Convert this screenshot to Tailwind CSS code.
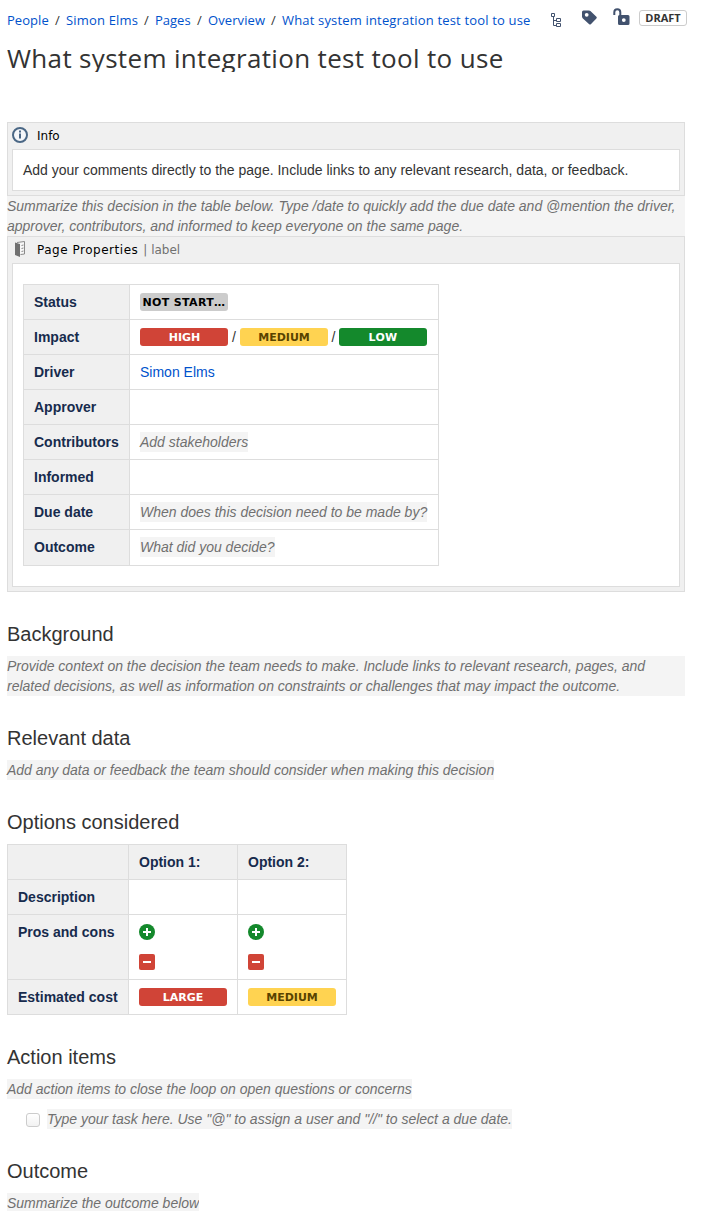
<!DOCTYPE html>
<html lang="en">
<head>
<meta charset="utf-8">
<title>What system integration test tool to use</title>
<script src="https://cdn.jsdelivr.net/npm/@tailwindcss/browser@4"></script>
</head>
<body class="h-[1221px] w-[707px] overflow-hidden bg-white pl-[7px] font-['Liberation_Sans',Arial,sans-serif] text-[14px] leading-5 text-[#333]">
<header class="h-[122px] whitespace-nowrap font-['Open_Sans','Noto_Sans',sans-serif]">
  <div class="flex h-10 items-start">
    <nav class="mt-[10px] flex w-[543px] text-[13px] text-[#0052cc]">
      <a class="w-[48px] tracking-[0.05px]">People</a><span class="w-[11px] text-[#333]">/</span>
      <a class="w-[78px] tracking-[0.17px]">Simon Elms</a><span class="w-[11px] text-[#333]">/</span>
      <a class="w-[42px]">Pages</a><span class="w-[11px] text-[#333]">/</span>
      <a class="w-[63px] tracking-[0.1px]">Overview</a><span class="w-[11px] text-[#333]">/</span>
      <a class="tracking-[0.17px]">What system integration test tool to use</a>
    </nav>
    <svg class="mt-3 h-[16px] w-[12px]" viewBox="0 0 12 16" fill="none" stroke="#42526e"><path d="M1.500 1.500h3v3h-3zM6.500 6.500h4v3h-4zM6.500 11.500h4v3h-4zM3.500 5v8.500H6M3.500 8.500H6" /></svg>
    <svg class="mt-[10px] ml-[20px] h-[16px] w-[16px]" viewBox="0 0 16 16" fill="#42526e"><path fill-rule="evenodd" d="M1.500 0.500h5.500q.8 0 1.400.6l6 5.600q.9.800 0 1.700l-5.600 5.800q-.800.800-1.600 0L.9 8.400Q0 7.600 0 6.500V2Q0 .500 1.500.500zM4.700 2.900a1.900 1.900 0 1 0 0 3.800 1.900 1.900 0 0 0 0-3.800z"/></svg>
    <svg class="mt-[8px] ml-[15px] h-[18px] w-[18px]" viewBox="0 0 18 18"><path d="M1.300 7V4.200a3 3 0 0 1 6 0V8" fill="none" stroke="#42526e" stroke-width="2"/><path fill="#42526e" fill-rule="evenodd" d="M6.500 7h8.500q1.500 0 1.500 1.500v7q0 1.500-1.500 1.500H6.500Q5 17 5 15.500v-7Q5 7 6.500 7zM10.800 10.200a1.900 1.900 0 1 0 0 3.800 1.900 1.900 0 0 0 0-3.800z"/></svg>
    <span class="mt-[10px] ml-[8px] h-4 w-12 rounded-[3px] border border-[#ccc] text-center text-[11px] font-bold leading-[14px] text-[#333]">DRAFT</span>
  </div>
  <h1 class="h-8 overflow-hidden text-[26px] leading-[36px] tracking-[0.33px]">What system integration test tool to use</h1>
</header>

<main class="w-[678px]">
  <section class="h-[74px] border border-[#ddd] bg-[#f0f0f0] px-1">
    <div class="flex h-[26px] items-center font-['DejaVu_Sans',sans-serif] text-[12px] text-black">
      <svg class="-mt-[2px] size-4" viewBox="0 0 16 16"><circle cx="8" cy="8" r="7" fill="#f5f7fa" stroke="#4a6785" stroke-width="2"/><path fill="#4a6785" d="M7 3.500h2v2H7zM7 6.500h2v5H7z"/></svg>
      <span class="ml-[9px]">Info</span>
    </div>
    <div class="h-[42px] border border-[#ddd] bg-white px-[10px] py-[10px]">Add your comments directly to the page. Include links to any relevant research, data, or feedback.</div>
  </section>
  <p class="h-10 whitespace-nowrap bg-[#f4f4f4] italic text-[#707070]">Summarize this decision in the table below. Type /date to quickly add the due date and @mention the driver,<br>approver, contributors, and informed to keep everyone on the same page.</p>
  <section class="h-[356px] border border-[#ddd] bg-[#f0f0f0] px-1">
    <div class="flex h-[26px] items-center font-['DejaVu_Sans',sans-serif] text-[12px] text-black">
      <svg class="-mt-[2px] size-4" viewBox="0 0 16 16"><path d="M5 1.500l7.500-1v12.500l-4 .500" fill="#f7f7f7" stroke="#8a8a8a"/><path fill="#707070" d="M3 1.500l5 1.500v13l-5-2z"/><path d="M9.500 4.500l2-.5M9.500 7.500l2-.5M9.500 10.500l2-.5" stroke="#8a8a8a"/></svg>
      <span class="ml-[9px] tracking-[0.52px]">Page Properties</span><span class="ml-[5px] text-[#707070]">| label</span>
    </div>
    <div class="h-[324px] border border-[#ddd] bg-white px-[10px] pt-5">
      <div class="grid w-[416px] grid-cols-[106px_309px] grid-rows-[repeat(7,35px)_36px] border-t border-l border-[#ddd] *:border-r *:border-b *:border-[#ddd] *:px-[10px] *:pt-[7px] *:odd:bg-[#f0f0f0] *:odd:font-bold *:odd:text-[#172b4d]">
        <div>Status</div>
        <div class="flex"><span class="mt-[1px] h-[18px] w-[88px] rounded-[3px] bg-[#ccc] text-center font-['DejaVu_Sans',sans-serif] text-[11px] font-bold leading-[19px] tracking-[0.35px] text-black">NOT START…</span></div>
        <div>Impact</div>
        <div class="flex"><span class="mt-[1px] h-[18px] w-[88px] rounded-[3px] bg-[#d04437] pl-px text-center font-['DejaVu_Sans',sans-serif] text-[11px] font-bold leading-[19px] text-white">HIGH</span><span class="w-3 text-center">/</span><span class="mt-[1px] h-[18px] w-[88px] rounded-[3px] bg-[#ffd351] text-center font-['DejaVu_Sans',sans-serif] text-[11px] font-bold leading-[19px] text-[#594300]">MEDIUM</span><span class="w-[11px] text-center">/</span><span class="mt-[1px] h-[18px] w-[88px] rounded-[3px] bg-[#14892c] text-center font-['DejaVu_Sans',sans-serif] text-[11px] font-bold leading-[19px] tracking-[0.3px] text-white">LOW</span></div>
        <div>Driver</div>
        <div><a class="text-[#0052cc]">Simon Elms</a></div>
        <div>Approver</div>
        <div></div>
        <div>Contributors</div>
        <div><span class="inline-block bg-[#f4f4f4] italic text-[#707070]">Add stakeholders</span></div>
        <div>Informed</div>
        <div></div>
        <div>Due date</div>
        <div><span class="inline-block whitespace-nowrap bg-[#f4f4f4] italic text-[#707070]">When does this decision need to be made by?</span></div>
        <div>Outcome</div>
        <div><span class="inline-block bg-[#f4f4f4] italic text-[#707070]">What did you decide?</span></div>
      </div>
    </div>
  </section>

  <h2 class="mt-8 mb-3 text-xl leading-5">Background</h2>
  <p class="h-10 whitespace-nowrap bg-[#f4f4f4] italic text-[#707070]">Provide context on the decision the team needs to make. Include links to relevant research, pages, and<br>related decisions, as well as information on constraints or challenges that may impact the outcome.</p>

  <h2 class="mt-8 mb-3 text-xl leading-5">Relevant data</h2>
  <p class="w-fit bg-[#f4f4f4] italic text-[#707070]">Add any data or feedback the team should consider when making this decision</p>

  <h2 class="mt-8 mb-3 text-xl leading-5">Options considered</h2>
  <div class="grid w-[340px] grid-cols-[121px_109px_109px] grid-rows-[35px_35px_65px_35px] border-t border-l border-[#ddd] *:border-r *:border-b *:border-[#ddd] *:px-[10px] *:pt-[7px]">
    <div class="bg-[#f0f0f0]"></div>
    <div class="bg-[#f0f0f0] font-bold text-[#172b4d]">Option 1:</div>
    <div class="bg-[#f0f0f0] font-bold text-[#172b4d]">Option 2:</div>
    <div class="bg-[#f0f0f0] font-bold text-[#172b4d]">Description</div>
    <div></div>
    <div></div>
    <div class="bg-[#f0f0f0] font-bold text-[#172b4d]">Pros and cons</div>
    <div class="flex flex-col gap-[14px]">
      <svg class="mt-[2px] size-4" viewBox="0 0 16 16"><circle cx="8" cy="8" r="8" fill="#14892c"/><path d="M4 8h8M8 4v8" stroke="#fff" stroke-width="2"/></svg>
      <svg class="size-4" viewBox="0 0 16 16"><rect width="16" height="16" rx="2" fill="#d04437"/><path d="M4 8h8" stroke="#fff" stroke-width="2"/></svg>
    </div>
    <div class="flex flex-col gap-[14px]">
      <svg class="mt-[2px] size-4" viewBox="0 0 16 16"><circle cx="8" cy="8" r="8" fill="#14892c"/><path d="M4 8h8M8 4v8" stroke="#fff" stroke-width="2"/></svg>
      <svg class="size-4" viewBox="0 0 16 16"><rect width="16" height="16" rx="2" fill="#d04437"/><path d="M4 8h8" stroke="#fff" stroke-width="2"/></svg>
    </div>
    <div class="bg-[#f0f0f0] font-bold whitespace-nowrap text-[#172b4d]">Estimated cost</div>
    <div class="flex"><span class="mt-[1px] h-[18px] w-[88px] rounded-[3px] bg-[#d04437] text-center font-['DejaVu_Sans',sans-serif] text-[11px] font-bold leading-[19px] text-white">LARGE</span></div>
    <div class="flex"><span class="mt-[1px] h-[18px] w-[88px] rounded-[3px] bg-[#ffd351] text-center font-['DejaVu_Sans',sans-serif] text-[11px] font-bold leading-[19px] text-[#594300]">MEDIUM</span></div>
  </div>

  <h2 class="mt-8 mb-3 text-xl leading-5">Action items</h2>
  <p class="w-fit bg-[#f4f4f4] italic text-[#707070]">Add action items to close the loop on open questions or concerns</p>
  <div class="mt-[10px] flex pl-[19px]">
    <span class="mt-1 size-[14px] rounded-[3px] border border-[#ccc] bg-linear-to-b from-white to-[#f2f2f2]"></span>
    <span class="ml-[7px] bg-[#f4f4f4] italic text-[#707070]">Type your task here. Use "@" to assign a user and "//" to select a due date.</span>
  </div>

  <h2 class="mt-8 mb-3 text-xl leading-5">Outcome</h2>
  <p class="h-[18px] w-fit overflow-hidden bg-[#f4f4f4] italic text-[#707070]">Summarize the outcome below</p>
</main>
</body>
</html>
